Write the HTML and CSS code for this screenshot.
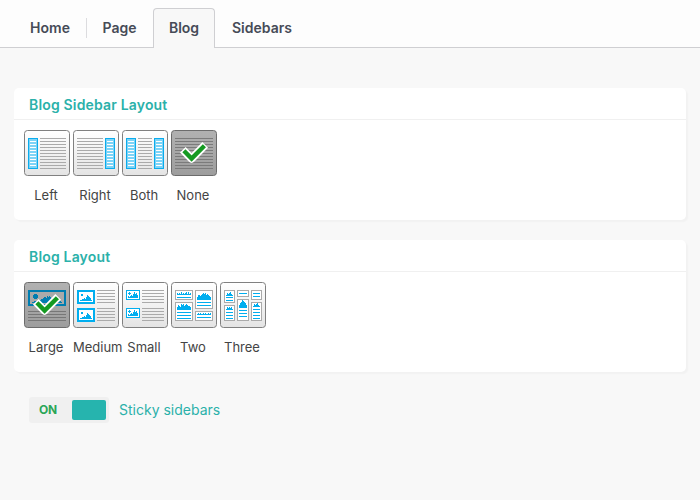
FILE: index.html
```
<!DOCTYPE html>
<html lang="en">
<head>
<meta charset="utf-8">
<title>Blog settings</title>
<link rel="stylesheet" href="styles.css">
</head>
<body>
<nav class="tabs">
  <a class="tab home"><span>Home</span></a>
  <a class="tab page"><span>Page</span></a>
  <a class="tab active"><span>Blog</span></a>
  <a class="tab sidebars"><span>Sidebars</span></a>
</nav>
<main>
  <section class="card">
    <h2><span>Blog Sidebar Layout</span></h2>
    <div class="options" id="sidebar-options"></div>
  </section>
  <section class="card">
    <h2><span>Blog Layout</span></h2>
    <div class="options" id="layout-options"></div>
  </section>
  <div class="setting">
    <div class="switch"><span class="on">ON</span><span class="knob"></span></div>
    <span class="setting-label">Sticky sidebars</span>
  </div>
</main>
<script src="icons.js"></script>
</body>
</html>
```
FILE: styles.css
```
* { box-sizing: border-box; }
body { margin: 0; background: #f8f8f8; color: #444; font: 13px/20px Inter, "Liberation Sans", sans-serif; }
.tabs { display: flex; align-items: flex-end; height: 48px; padding-left: 14px; background: #fdfdfd; border-bottom: 1px solid #cfcfd2; }
.tab { display: flex; justify-content: center; align-items: center; height: 40px; color: #464b57; font-size: 14px; font-weight: 600; margin-bottom: -1px; }
.home { width: 72px; position: relative; }
.home::after { content: ""; position: absolute; right: -1px; top: 10px; width: 1px; height: 20px; background: #dcdcdf; }
.page { width: 67px; }
.active { width: 62px; padding-bottom: 1px; border: 1px solid #cfcfd2; border-bottom: 0; border-radius: 4px 4px 0 0; background: #f8f8f8; }
.sidebars { width: 94px; }
main { padding: 40px 14px 0; }
.card { height: 132px; margin-bottom: 20px; background: #fff; border-radius: 5px; box-shadow: 2px 2px 1px #f2f2f2; }
h2 { margin: 0; height: 32px; padding: 7px 15px 0; border-bottom: 1px solid #f0f0f0; font-size: 14px; line-height: 20px; font-weight: 600; letter-spacing: .17px; color: #2bb1aa; }
.options { display: flex; gap: 3px; padding: 10px 10px 0; }
.option { width: 46px; white-space: nowrap; }
.option svg { display: block; margin-bottom: 9px; }
.label { display: block; width: 44px; text-align: center; }
.setting { display: flex; align-items: center; height: 26px; margin: 25px 0 0 15px; }
.switch { display: flex; align-items: center; justify-content: space-between; width: 80px; height: 26px; padding: 0 3px 0 10px; border-radius: 3px; background: #f0f0f0; }
.on { color: #2ba657; font-size: 12px; font-weight: 700; letter-spacing: -.2px; }
.knob { width: 34px; height: 20px; border-radius: 2px; background: #26b4ae; }
.setting-label { margin-left: 10px; font-size: 14px; color: #2bb1aa; }
```
FILE: icons.js
```
const BLUE = '#00aeef';
const rect = (x, y, w, h, fill) => `<rect x="${x}" y="${y}" width="${w}" height="${h}" fill="${fill}"/>`;
const lines = (x, y, w, n, fill = '#aaa') => Array.from({ length: n }, (_, i) => rect(x, y + i * 3, w, 1, fill)).join('');
const sidebar = x => rect(x, 8, 10, 31, '#0aaced') + rect(x + 1, 9, 8, 29, '#7dd3f6') + lines(x + 2, 11, 6, 9, '#fff');
const frame = (x, y, w, h) => `<rect x="${x + .5}" y="${y + .5}" width="${w - 1}" height="${h - 1}" fill="#fff" stroke="#aaa"/>`;
// Skyline of one-pixel columns standing on y; one digit per column height
const hill = (x, y, heights, fill = BLUE) => [...heights].map((h, i) => rect(x + i, y - h, 1, +h, fill)).join('');
const photo = (x, y, w, h, b) => `<rect x="${x + b / 2}" y="${y + b / 2}" width="${w - b}" height="${h - b}" fill="#fff" stroke="${BLUE}" stroke-width="${b}"/>`;
const mediumPhoto = y => photo(4, y, 18, 14, 2) + rect(8, y + 4, 2, 2, BLUE) + hill(7, y + 11, '112232465431');
const smallPhoto = y => photo(4, y, 14, 10, 1) + rect(7, y + 2, 1, 3, BLUE) + rect(6, y + 3, 3, 1, BLUE) + hill(6, y + 8, '2123246453');
const check = '<path d="M11.8 19.8 20.6 28.7 34.2 14.9" fill="none" stroke="#fff" stroke-width="8" stroke-linejoin="round"/><path d="M12.9 20.8 20.6 28.6 33.4 15.8" fill="none" stroke="#159a22" stroke-width="4.4"/>';

const largePhoto = rect(4, 8, 38, 16, '#007db0') + rect(6, 10, 34, 12, '#aaa')
  + rect(9, 13, 5, 3, '#007db0') + rect(10, 12, 3, 5, '#007db0')
  + hill(8, 21, '112222333445665767654535434221', '#007db0');

const icons = {
  Left: sidebar(4) + lines(16, 8, 26, 11),
  Right: lines(4, 8, 26, 11) + sidebar(32),
  Both: sidebar(4) + lines(16, 8, 14, 11) + sidebar(32),
  None: lines(4, 8, 38, 11, '#7b7b7b') + check,
  Large: largePhoto + lines(4, 29, 38, 4, '#777') + check,
  Medium: mediumPhoto(8) + mediumPhoto(26) + lines(24, 8, 18, 5) + lines(24, 26, 18, 5),
  Small: smallPhoto(8) + smallPhoto(26) + lines(20, 8, 22, 5) + lines(20, 26, 22, 5),
  Two: frame(4, 8, 18, 10) + hill(6, 13, '21213121231312') + lines(6, 15, 14, 1, BLUE)
    + frame(24, 8, 18, 19) + hill(26, 18, '35545676756543') + lines(26, 20, 14, 2, BLUE)
    + frame(4, 20, 18, 19) + hill(6, 28, '35436564565443') + lines(6, 30, 14, 3, BLUE)
    + frame(24, 29, 18, 10) + hill(26, 33, '12121121211212') + lines(26, 35, 14, 1, BLUE),
  Three: frame(4, 8, 11, 13) + hill(6, 14, '1323421') + lines(6, 15, 7, 2, BLUE)
    + frame(17, 8, 12, 7) + lines(19, 11, 8, 1, BLUE)
    + frame(31, 8, 11, 10) + lines(33, 11, 7, 2, BLUE)
    + frame(4, 23, 11, 16) + hill(6, 28, '1323231') + lines(6, 30, 7, 3, BLUE)
    + frame(17, 17, 12, 22) + hill(19, 26, '35687653') + lines(19, 28, 8, 3, BLUE)
    + frame(31, 20, 11, 19) + hill(33, 25, '1323421') + lines(33, 27, 7, 4, BLUE)
};

function option(name) {
  const selected = name === 'None' || name === 'Large';
  const id = 'bg-' + name;
  const [top, bottom, border] = selected ? ['#b1b1b1', '#9d9d9d', '#6c6c6c'] : ['#fff', '#e4e4e4', '#808080'];
  return `<div class="option"><svg width="46" height="46" viewBox="0 0 46 46">
    <defs><linearGradient id="${id}" x2="0" y2="1"><stop stop-color="${top}"/><stop offset="1" stop-color="${bottom}"/></linearGradient></defs>
    <rect x=".5" y=".5" width="45" height="45" rx="3" fill="url(#${id})" stroke="${border}"/>${icons[name]}</svg><span class="label">${name}</span></div>`;
}
document.getElementById('sidebar-options').innerHTML = ['Left', 'Right', 'Both', 'None'].map(option).join('');
document.getElementById('layout-options').innerHTML = ['Large', 'Medium', 'Small', 'Two', 'Three'].map(option).join('');
```
